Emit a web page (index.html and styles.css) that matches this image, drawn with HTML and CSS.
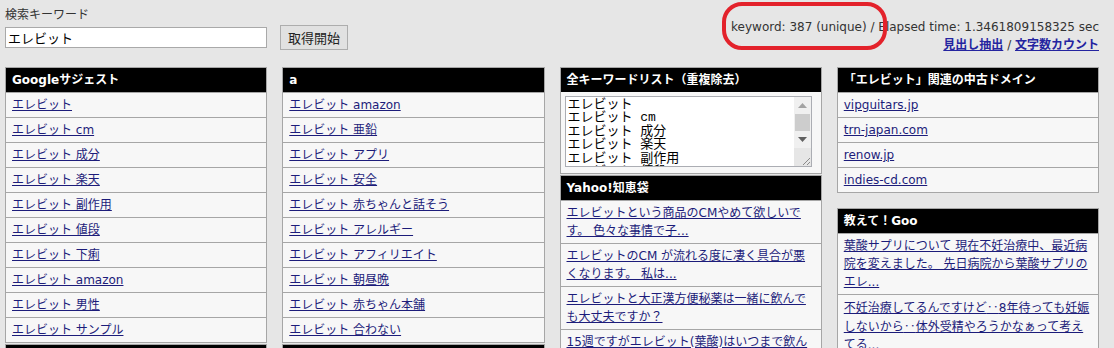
FILE: index.html
```html
<!DOCTYPE html>
<html lang="ja">
<head>
    <meta charset="UTF-8">
    <meta name="viewport" content="width=device-width, initial-scale=1.0">
    <title>キーワード取得ツール</title>
    <link rel="stylesheet" href="styles.css">
</head>
<body>
    <div class="top">
        <form class="search">
            <label for="keyword">検索キーワード</label>
            <div class="search-row">
                <input type="text" id="keyword" value="エレビット">
                <button type="button">取得開始</button>
            </div>
        </form>
        <div class="stats">
            <p>keyword: 387 (unique) / Elapsed time: 1.3461809158325 sec</p>
            <p class="tools"><a href="#">見出し抽出</a> / <a href="#">文字数カウント</a></p>
        </div>
        <!-- red marker drawn over the counter -->
        <div class="marker"></div>
    </div>

    <div class="columns">
        <div class="col">
            <div class="box">
                <h2>Googleサジェスト</h2>
                <ul class="list">
                    <li><a href="#">エレビット</a></li>
                    <li><a href="#">エレビット cm</a></li>
                    <li><a href="#">エレビット 成分</a></li>
                    <li><a href="#">エレビット 楽天</a></li>
                    <li><a href="#">エレビット 副作用</a></li>
                    <li><a href="#">エレビット 値段</a></li>
                    <li><a href="#">エレビット 下痢</a></li>
                    <li><a href="#">エレビット amazon</a></li>
                    <li><a href="#">エレビット 男性</a></li>
                    <li><a href="#">エレビット サンプル</a></li>
                </ul>
            </div>
            <div class="box">
                <h2>b</h2>
                <ul class="list">
                    <li><a href="#">エレビット ブログ</a></li>
                </ul>
            </div>
        </div>

        <div class="col">
            <div class="box">
                <h2>a</h2>
                <ul class="list">
                    <li><a href="#">エレビット amazon</a></li>
                    <li><a href="#">エレビット 亜鉛</a></li>
                    <li><a href="#">エレビット アプリ</a></li>
                    <li><a href="#">エレビット 安全</a></li>
                    <li><a href="#">エレビット 赤ちゃんと話そう</a></li>
                    <li><a href="#">エレビット アレルギー</a></li>
                    <li><a href="#">エレビット アフィリエイト</a></li>
                    <li><a href="#">エレビット 朝昼晩</a></li>
                    <li><a href="#">エレビット 赤ちゃん本舗</a></li>
                    <li><a href="#">エレビット 合わない</a></li>
                </ul>
            </div>
            <div class="box">
                <h2>c</h2>
                <ul class="list">
                    <li><a href="#">エレビット cm</a></li>
                </ul>
            </div>
        </div>

        <div class="col">
            <div class="box">
                <h2>全キーワードリスト（重複除去）</h2>
                <div class="kw-body">
                    <div class="kw-area">
                        <textarea readonly>エレビット
エレビット cm
エレビット 成分
エレビット 楽天
エレビット 副作用
エレビット 値段
エレビット 下痢
エレビット amazon</textarea>
                        <div class="scrollbar">
                            <span class="sb-btn"><svg width="9" height="5" viewBox="0 0 9 5"><path d="M0 5 L4.5 0 L9 5 Z" fill="#a3a3a3"/></svg></span>
                            <span class="sb-thumb"></span>
                            <span class="sb-btn"><svg width="9" height="5" viewBox="0 0 9 5"><path d="M0 0 L9 0 L4.5 5 Z" fill="#606060"/></svg></span>
                            <span class="sb-grip"><svg width="10" height="10" viewBox="0 0 10 10"><path d="M2 9 L9 2 M6 9 L9 6" stroke="#8a8a8a" stroke-width="1"/></svg></span>
                        </div>
                    </div>
                </div>
            </div>
            <div class="box">
                <h2>Yahoo!知恵袋</h2>
                <ul class="list multi">
                    <li><a href="#">エレビットという商品のCMやめて欲しいで<br>す。 色々な事情で子...</a></li>
                    <li><a href="#">エレビットのCM が流れる度に凄く具合が悪<br>くなります。 私は...</a></li>
                    <li><a href="#">エレビットと大正漢方便秘薬は一緒に飲んで<br>も大丈夫ですか？</a></li>
                    <li><a href="#">15週ですがエレビット(葉酸)はいつまで飲ん<br>でいいのでしょうか？...</a></li>
                </ul>
            </div>
        </div>

        <div class="col">
            <div class="box">
                <h2>「エレビット」関連の中古ドメイン</h2>
                <ul class="list">
                    <li><a href="#">vipguitars.jp</a></li>
                    <li><a href="#">trn-japan.com</a></li>
                    <li><a href="#">renow.jp</a></li>
                    <li><a href="#">indies-cd.com</a></li>
                </ul>
            </div>
            <div class="box spaced">
                <h2>教えて！Goo</h2>
                <ul class="list multi">
                    <li><a href="#">葉酸サプリについて 現在不妊治療中、最近病<br>院を変えました。 先日病院から葉酸サプリの<br>エレ...</a></li>
                    <li><a href="#">不妊治療してるんですけど<span class="ja">‥</span>8年待っても妊娠<br>しないから<span class="ja">‥</span>体外受精やろうかなぁって考え<br>てる...</a></li>
                </ul>
            </div>
        </div>
    </div>
</body>
</html>
```

FILE: styles.css
```css
body {
    margin: 0;
    padding: 0 15px 0 5px;
    position: relative;
    background-color: #e6e6e6;
    color: #333333;
    font-family: "DejaVu Sans", "Noto Sans CJK JP", sans-serif;
    font-size: 12px;
}
a {
    color: #1c1c7a;
}
.ja {
    font-family: "Noto Sans CJK JP", sans-serif;
}

/* top bar */
.top {
    display: flex;
    justify-content: space-between;
    height: 67px;
}
.search {
    margin: 0;
    padding-top: 7px;
}
.search label {
    display: block;
    line-height: 16px;
}
.search-row {
    display: flex;
    align-items: center;
    gap: 13px;
    margin-top: 2px;
}
.search-row input {
    box-sizing: border-box;
    width: 262px;
    height: 21px;
    margin: 0;
    padding: 0 2px;
    border: 1px solid #a9a9a9;
    background: #ffffff;
    color: #000000;
    font-family: "Noto Sans CJK JP", sans-serif;
    font-size: 13px;
}
.search-row button {
    box-sizing: border-box;
    width: 68px;
    height: 25px;
    padding: 0;
    border: 1px solid #adadad;
    background: #e1e1e1;
    color: #222222;
    font-family: "Noto Sans CJK JP", sans-serif;
    font-size: 13px;
}
.stats {
    padding-top: 18px;
    text-align: right;
    line-height: 18px;
}
.stats p {
    margin: 0;
}
.tools a {
    font-weight: bold;
    color: #2424a0;
}
.marker {
    position: absolute;
    left: 722px;
    top: 2px;
    width: 165px;
    height: 48px;
    box-sizing: border-box;
    border: 4px solid #e3222b;
    border-radius: 20px;
}

/* columns */
.columns {
    display: grid;
    grid-template-columns: repeat(4, 1fr);
    column-gap: 15px;
    align-items: start;
}
.box {
    border: 1px solid #a6a6a6;
    background: #f7f7f7;
    margin-bottom: 1px;
}
.box.spaced {
    margin-top: 15px;
}
.box h2 {
    margin: 0;
    padding: 0 6px;
    background: #000000;
    color: #ffffff;
    font-size: 12px;
    font-weight: bold;
    line-height: 24px;
    white-space: nowrap;
}
.list {
    list-style: none;
    margin: 0;
    padding: 0;
}
.list li {
    border-top: 1px solid #a6a6a6;
    padding: 0 6px;
    line-height: 24px;
    white-space: nowrap;
    overflow: hidden;
}
.list.multi li {
    padding: 3px 6px;
    line-height: 18px;
}

/* keyword list textarea */
.kw-body {
    padding: 4px 9px 6px 4px;
}
.kw-area {
    display: flex;
    height: 71px;
    box-sizing: border-box;
    border: 1px solid #abadb3;
    background: #ffffff;
}
.kw-area textarea {
    flex: 1;
    margin: 0;
    padding: 1px 2px;
    border: none;
    resize: none;
    overflow: hidden;
    color: #000000;
    font-family: "Liberation Mono", "Noto Sans CJK JP", monospace;
    font-size: 13px;
    line-height: 13.4px;
}
.scrollbar {
    display: flex;
    flex-direction: column;
    width: 17px;
    background: #f0f0f0;
}
.sb-btn {
    display: flex;
    align-items: center;
    justify-content: center;
    height: 17px;
}
.sb-thumb {
    height: 17px;
    margin: 0 1px;
    background: #cdcdcd;
}
.sb-grip {
    display: flex;
    align-items: flex-end;
    justify-content: flex-end;
    flex: 1;
    background: #e6e6e6;
}
```
